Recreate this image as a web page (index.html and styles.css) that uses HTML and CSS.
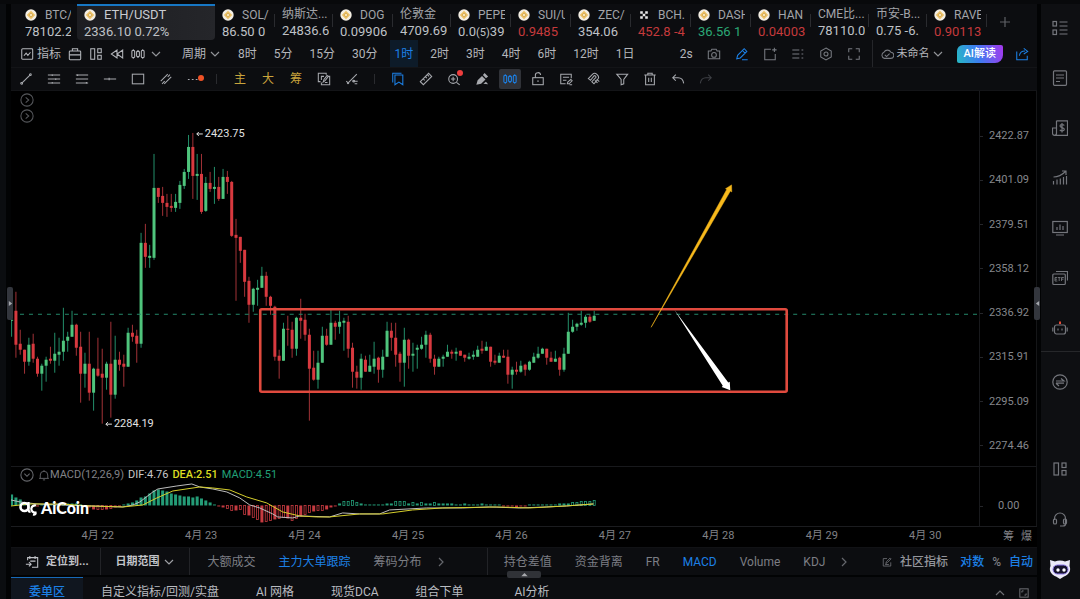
FILE: index.html
```html
<!DOCTYPE html>
<html lang="zh-CN">
<head>
<meta charset="utf-8">
<title>ETH/USDT</title>
<link rel="stylesheet" href="styles.css">
</head>
<body>
<svg class="defs" aria-hidden="true">
  <symbol id="coin" viewBox="0 0 12 12"><circle cx="6" cy="6" r="5.7" fill="#f4efe4"/><path d="M6 1.8 10.2 6 6 10.2 1.8 6Z" fill="#ecc063"/><path d="M6 4 8 6 6 8 4 6Z" fill="#f6e3b4" stroke="#c8973a" stroke-width=".6"/></symbol>
  <symbol id="okx" viewBox="0 0 12 12"><path d="M2.2 2.2h2.6v2.6H2.2zM7.2 2.2h2.6v2.6H7.2zM4.7 4.7h2.6v2.6H4.7zM2.2 7.2h2.6v2.6H2.2zM7.2 7.2h2.6v2.6H7.2z" fill="#e6e6e6"/></symbol>
  <symbol id="down" viewBox="0 0 10 10"><path d="M1 3l4 4 4-4"/></symbol>
  <symbol id="up" viewBox="0 0 10 10"><path d="M1 7l4-4 4 4"/></symbol>
  <symbol id="right" viewBox="0 0 10 10"><path d="M3 1l4 4-4 4"/></symbol>
  <symbol id="indicator" viewBox="0 0 16 16"><rect x="2" y="2" width="12.500" height="12" rx="1"/><path d="M4.500 10l2.500-3 2 2.500 3-3.500"/></symbol>
  <symbol id="case" viewBox="0 0 16 16"><rect x="1.500" y="4.500" width="13" height="10" rx="1"/><path d="M5 4.500V2h6v2.500M1.500 9h13"/></symbol>
  <symbol id="panels" viewBox="0 0 16 16"><rect x="2" y="2" width="4.500" height="12"/><rect x="10" y="2" width="4" height="4.500"/><rect x="10" y="9.500" width="4" height="4.500"/></symbol>
  <symbol id="rewind" viewBox="0 0 16 16"><path d="M8 3.500v9L1.500 8zM14.500 3.500v9L8 8z"/></symbol>
  <symbol id="bars" viewBox="0 0 16 16"><rect x="1" y="4" width="3.200" height="8" rx="1"/><rect x="6.400" y="5" width="3.200" height="6" rx="1"/><rect x="11.800" y="4" width="3.200" height="8" rx="1"/><path d="M2.600 2.500V4M2.600 12v1.500M8 3.500V5M8 11v1.500M13.400 2.500V4M13.400 12v1.500"/></symbol>
  <symbol id="camera" viewBox="0 0 16 16"><path d="M1.500 4.500h3l1-2h5l1 2h3v9h-13z"/><circle cx="8" cy="9" r="2.700"/></symbol>
  <symbol id="pen" viewBox="0 0 16 16"><path d="M2 13.500l1-4 7.500-7.500 3 3L6 12.500zM8.500 4l3 3M8 14.500h6.500"/></symbol>
  <symbol id="addframe" viewBox="0 0 16 16"><path d="M9 2.500H2v12h12V8M13 .8v5M10.500 3.300h5"/></symbol>
  <symbol id="listdots" viewBox="0 0 16 16"><path d="M1.500 3.500h8M1.500 8h8M1.500 12.500h8M12 3.500h2M12 8h2M12 12.500h2"/></symbol>
  <symbol id="hex" viewBox="0 0 16 16"><path d="M8 1.200l6 3.300v7L8 14.800l-6-3.300v-7z"/><circle cx="8" cy="8" r="2.300"/></symbol>
  <symbol id="full" viewBox="0 0 16 16"><path d="M2 6V2h4M10 2h4v4M14 10v4h-4M6 14H2v-4"/></symbol>
  <symbol id="cloud" viewBox="0 0 16 16"><path d="M5 13a3.700 3.700 0 0 1-.5-7A4.500 4.500 0 0 1 12.500 6a3.500 3.500 0 0 1-.5 7zM5.500 9l2 2 3.500-3.500"/></symbol>
  <symbol id="share" viewBox="0 0 16 16"><path d="M2 5v9.500h12V10M5 10c.5-4 3-5.500 6.500-5.500M10 1.500l4.500 3.500L10 8"/></symbol>
  <symbol id="line" viewBox="0 0 16 16"><path d="M3.500 12.500l9-9"/><circle cx="3" cy="13" r="1"/><circle cx="13" cy="3" r="1"/></symbol>
  <symbol id="fib" viewBox="0 0 16 16"><path d="M1 3.500h14M1 8h14M1 12.500h14M6 2.500v2M10 7v2M6 11.500v2"/></symbol>
  <symbol id="fib2" viewBox="0 0 16 16"><path d="M1 3.500h14M1 8h14M1 12.500h14M3 2.500v2M13 11.500v2"/></symbol>
  <symbol id="hline" viewBox="0 0 16 16"><path d="M1 8h14M7 6.500v3"/></symbol>
  <symbol id="rect" viewBox="0 0 16 16"><rect x="1.500" y="2.500" width="13" height="11"/></symbol>
  <symbol id="parallel" viewBox="0 0 16 16"><path d="M2 10.500l8-8M6 13.500l8-8M3.500 13.500l3-3M10 5.500l2.500-2.500"/></symbol>
  <symbol id="dots" viewBox="0 0 16 16"><path d="M1 8.500h2M5.500 8.500h2M10 8.500h2"/></symbol>
  <symbol id="copyedit" viewBox="0 0 16 16"><path d="M4 11H1.500V1.500h9V3M12.500 5H14.500v9.500H5V12M5 9V5h3M7 11.500l1-3 3.500-4.500 1.500 1-3.500 4.500zM9 12h3"/></symbol>
  <symbol id="cross" viewBox="0 0 16 16"><path d="M2.500 13.500l11-11M1.500 10.500l3 3M8.500 10.500h6M11 13.500h3"/><circle cx="10" cy="10.500" r="1"/></symbol>
  <symbol id="bookmark" viewBox="0 0 16 16"><path d="M4.500 3.500h9v11l-4.500-3-4.500 3zM2 12V1.500h10"/></symbol>
  <symbol id="ruler" viewBox="0 0 16 16"><path d="M1.500 11L11 1.500 14.500 5 5 14.500zM5 8l1.500 1.500M7.500 5.500L9 7M10 3.500L11.500 5"/></symbol>
  <symbol id="zoomin" viewBox="0 0 16 16"><circle cx="7" cy="8" r="5"/><path d="M10.800 11.800l3.700 3M4.500 8h5M7 5.500v5"/></symbol>
  <symbol id="eraser" viewBox="0 0 16 16"><path d="M1.500 14.500l1.500-5 5-5 4 4-5 5zM9 3.500l2-2.500 4 4-2.500 2zM9.500 13.500l3-2.500 2.500 3z" fill="currentColor" stroke="none"/></symbol>
  <symbol id="lock" viewBox="0 0 16 16"><rect x="2" y="6.500" width="12" height="8"/><path d="M5 6.500V4a3 3 0 0 1 6-.5M8 9.500v2"/></symbol>
  <symbol id="note" viewBox="0 0 16 16"><path d="M14 7V2.500H2v11h5.500M4.500 6h7M4.500 9.500h4M9.500 13.500l.5-2 3.500-3 1.500 1.500-3.500 3.500zM12 14.500h3"/></symbol>
  <symbol id="magnet" viewBox="0 0 16 16"><path d="M1.500 7.500l5-5c3-3 8.500 2.500 6 5.500L8 13.500 5.500 11l4.500-4.500c1-1-1-3-2-2L4 9.500zM9 9.500l3 3M11 8l3 3"/></symbol>
  <symbol id="filter" viewBox="0 0 16 16"><path d="M2 2.500h12.500L10 8.500v5l-3 1v-6z"/></symbol>
  <symbol id="trash" viewBox="0 0 16 16"><path d="M1.500 3.500h13M5.500 3.500v-2h5v2M3 3.500v11h10v-11M6.500 6.500v5M9.500 6.500v5"/></symbol>
  <symbol id="undo" viewBox="0 0 16 16"><path d="M5.500 3L2 6.500 5.500 10M2 6.500h6c3.500 0 6 2.500 6.500 6.500"/></symbol>
  <symbol id="redo" viewBox="0 0 16 16"><path d="M10.500 3L14 6.500 10.500 10M14 6.500H8c-3.500 0-6 2.500-6.500 6.500"/></symbol>
  <symbol id="calendar" viewBox="0 0 16 16"><path d="M3 6V3h11.500v11H8M5.500 1v3.500M11.500 1v3.500M6 7h6M1 10.500h6M4.500 8L7 10.500 4.500 13"/></symbol>
  <symbol id="edit" viewBox="0 0 16 16"><path d="M8 2.500H2v12h12V8.500M6 10.500l1-3 6-6 1.500 1.500-6 6zM5 12h6"/></symbol>
  <symbol id="bell" viewBox="0 0 16 16"><path d="M1.500 12.500h13M3 12.500V8a5 5 0 0 1 10 0v4.500M8 3V1.500M6.500 14.500h3"/></symbol>
  <symbol id="circleright" viewBox="0 0 16 16"><circle cx="8" cy="8" r="7"/><path d="M6.500 5L10 8l-3.500 3"/></symbol>
  <symbol id="circledown" viewBox="0 0 16 16"><circle cx="8" cy="8" r="7"/><path d="M5 6.500L8 9.500l3-3"/></symbol>
  <symbol id="restore" viewBox="0 0 12 12"><rect x="1" y="1" width="10" height="10"/><path d="M3.500 5.500v-2h2M8.500 6.500v2h-2"/></symbol>
  <symbol id="s-list" viewBox="0 0 16 16"><rect x="1" y="1.500" width="3.500" height="4.500"/><rect x="1" y="10" width="3.500" height="4.500"/><path d="M7.500 2h8M7.500 6h8M7.500 10h8M7.500 14h8"/></symbol>
  <symbol id="s-doc" viewBox="0 0 16 16"><rect x="1.500" y=".8" width="13" height="14.500" rx="1"/><path d="M4 5h8M4 8h8M4 11.500h4"/></symbol>
  <symbol id="s-bill" viewBox="0 0 16 16"><path d="M4.500.8h11v14.500H2.500a2 2 0 0 1-2-2V8h4M4.500.8v12.500a2 2 0 0 1-2 2M10 3v9.500M12.300 5.500c-1-1.300-4.300-1.200-4.300.6 0 1.900 4.300 1.200 4.300 3.200 0 1.900-3.400 2-4.500.5"/></symbol>
  <symbol id="s-trend" viewBox="0 0 16 16"><path d="M1.500 14.500V11M5 14.500V9.500M8.300 14.500v-6M11.500 14.500V7M14.500 14.500V6M1.500 7C7 7 10 5 13.500 1.500M10 1h4v4"/></symbol>
  <symbol id="s-screen" viewBox="0 0 16 16"><rect x=".8" y="1.500" width="14.500" height="11"/><path d="M5 10V7M8 10V4.500M11 10V6M4 15h8"/></symbol>
  <symbol id="s-etf" viewBox="0 0 16 16"><rect x=".8" y="4" width="12.500" height="10.500" rx="1"/><path d="M4 1.500h11.500v9"/><path d="M5.300 7.500H3v3.500h2.300M3 9.200h2M6 7.500h2.500M7.200 7.500V11M9.500 11V7.500h2.300M9.500 9.200h2" stroke-width=".9"/></symbol>
  <symbol id="s-bot" viewBox="0 0 16 16"><rect x="2.500" y="5" width="11" height="9" rx="2"/><path d="M.8 7.500v4M15.200 7.500v4M6 8.500v2M10 8.500v2"/><path d="M8 4V1.500" stroke="#e84a35" stroke-width="2"/></symbol>
  <symbol id="s-swap" viewBox="0 0 16 16"><circle cx="8" cy="8" r="7.200"/><path d="M4 7h8L9 4.500M4 9.200h8M4 9.200L7 12"/></symbol>
  <symbol id="s-headset" viewBox="0 0 16 16"><path d="M2.500 9V7.500a5.500 5.500 0 0 1 11 0V13c0 1.300-1 2-2.500 2H8"/><rect x="1.500" y="8" width="3" height="5" rx="1.300"/><rect x="11.500" y="8" width="3" height="5" rx="1.300"/></symbol>
</svg>

<div class="app">
  <div class="gutter"><button class="handle" aria-label="展开左栏"><svg viewBox="0 0 6 8"><path d="M1 1v6l4-3z" fill="#a4a7ad"/></svg></button></div>

  <main class="main">
    <nav class="tickers" id="tickers" aria-label="行情"></nav>

    <div class="bar periods">
      <div class="tools">
        <button class="labeled"><svg class="icon"><use href="#indicator"/></svg>指标</button>
        <button aria-label="工具箱"><svg class="icon"><use href="#case"/></svg></button>
        <button aria-label="布局"><svg class="icon"><use href="#panels"/></svg></button>
        <button aria-label="回放"><svg class="icon"><use href="#rewind"/></svg></button>
        <button class="kline" aria-label="K线类型"><svg class="icon"><use href="#bars"/></svg><svg class="icon small"><use href="#down"/></svg></button>
      </div>
      <button class="cycle">周期<svg class="icon small"><use href="#down"/></svg></button>
      <div class="times">
        <button>8时</button><button>5分</button><button>15分</button><button>30分</button><button class="active">1时</button><button>2时</button><button>3时</button><button>4时</button><button>6时</button><button>12时</button><button>1日</button>
      </div>
      <div class="actions">
        <button>2s</button>
        <button aria-label="截图"><svg class="icon dim"><use href="#camera"/></svg></button>
        <button class="blue" aria-label="画图"><svg class="icon"><use href="#pen"/></svg></button>
        <button aria-label="新建"><svg class="icon dim"><use href="#addframe"/></svg></button>
        <button aria-label="列表"><svg class="icon dim"><use href="#listdots"/></svg></button>
        <button aria-label="设置"><svg class="icon dim"><use href="#hex"/></svg></button>
        <button aria-label="全屏"><svg class="icon dim"><use href="#full"/></svg></button>
      </div>
      <div class="saved">
        <button class="layout-name"><svg class="icon dim"><use href="#cloud"/></svg>未命名<svg class="icon small"><use href="#down"/></svg></button>
        <button class="ai">AI解读</button>
        <button class="blue" aria-label="分享"><svg class="icon"><use href="#share"/></svg></button>
      </div>
    </div>

    <div class="bar drawing">
      <div class="draw-group">
        <button aria-label="线段"><svg class="icon"><use href="#line"/></svg></button>
        <button aria-label="斐波那契"><svg class="icon"><use href="#fib"/></svg></button>
        <button aria-label="通道"><svg class="icon"><use href="#fib2"/></svg></button>
        <button aria-label="水平线"><svg class="icon"><use href="#hline"/></svg></button>
        <button aria-label="矩形"><svg class="icon"><use href="#rect"/></svg></button>
        <button aria-label="平行线"><svg class="icon"><use href="#parallel"/></svg></button>
        <button class="has-dot low" aria-label="更多"><svg class="icon"><use href="#dots"/></svg></button>
      </div>
      <div class="draw-group gold">
        <button>主</button><button>大</button><button>筹</button>
        <button class="plain" aria-label="编辑副本"><svg class="icon"><use href="#copyedit"/></svg></button>
        <button class="plain" aria-label="交叉线"><svg class="icon"><use href="#cross"/></svg></button>
      </div>
      <div class="draw-group">
        <button class="blue" aria-label="收藏"><svg class="icon"><use href="#bookmark"/></svg></button>
        <button aria-label="测量"><svg class="icon"><use href="#ruler"/></svg></button>
        <button class="has-dot" aria-label="放大"><svg class="icon"><use href="#zoomin"/></svg></button>
        <button aria-label="橡皮"><svg class="icon"><use href="#eraser"/></svg></button>
        <button class="blue pressed" aria-label="K线"><svg class="icon"><use href="#bars"/></svg></button>
        <button aria-label="锁定"><svg class="icon"><use href="#lock"/></svg></button>
        <button aria-label="笔记"><svg class="icon"><use href="#note"/></svg></button>
        <button aria-label="磁铁"><svg class="icon"><use href="#magnet"/></svg></button>
        <button aria-label="筛选"><svg class="icon"><use href="#filter"/></svg></button>
        <button aria-label="删除"><svg class="icon"><use href="#trash"/></svg></button>
        <button aria-label="撤销"><svg class="icon"><use href="#undo"/></svg></button>
        <button class="off" aria-label="重做"><svg class="icon"><use href="#redo"/></svg></button>
      </div>
    </div>

    <section class="pane price">
      <svg class="plot" viewBox="11 91 969 375" preserveAspectRatio="xMinYMin meet">
        <g id="candles"></g>
        <path class="last-price" d="M20 314.500H980"/>
        <rect class="range" x="260.500" y="309.500" width="527" height="82.500" rx="1.500"/>
        <path d="M651.800 327.500L727.500 189.500l-1.200-.7 6-3.800.2 7-1.400-.8z" fill="#f7b91c" stroke="#f7b91c" stroke-width=".5"/>
        <path d="M675 310L723.500 386l-1 1.200 8.500 3.300-.5-8.500-1.500.7z" fill="#fff"/>
        <text class="mark" x="205" y="137">2423.75</text>
        <path class="mark-arrow" d="M203 134h-6m2-2l-2 2 2 2"/>
        <text class="mark" x="114" y="427">2284.19</text>
        <path class="mark-arrow" d="M112 424.500h-6m2-2l-2 2 2 2"/>
      </svg>
      <div class="price-axis"><span>2422.87</span><span>2401.09</span><span>2379.51</span><span>2358.12</span><span>2336.92</span><span>2315.91</span><span>2295.09</span><span>2274.46</span></div>
      <div class="expanders">
        <button aria-label="展开"><svg class="icon"><use href="#circleright"/></svg></button>
        <button aria-label="展开"><svg class="icon"><use href="#circleright"/></svg></button>
      </div>
    </section>

    <section class="pane macd">
      <svg class="plot" viewBox="11 467 969 59" preserveAspectRatio="xMinYMin meet"><g id="macd"></g></svg>
      <div class="price-axis zero"><span>0.00</span></div>
      <div class="legend">
        <button aria-label="收起"><svg class="icon"><use href="#circledown"/></svg></button>
        <span class="name"><svg class="icon"><use href="#bell"/></svg>MACD(12,26,9)</span>
        <span class="dif">DIF:4.76</span><span class="dea">DEA:2.51</span><span class="hist">MACD:4.51</span>
      </div>
      <div class="brand">
        <svg viewBox="0 0 18 16"><circle cx="5.500" cy="7" r="4" fill="none" stroke="#fff" stroke-width="2.600"/><path d="M9.500 2v7.500c0 2 1 2.500 2 2.500M17 5.500a3.600 3.600 0 1 0-.5 7c.5 1.500-.5 2.500-2.500 2" fill="none" stroke="#fff" stroke-width="2.200"/></svg>
        <span>AiCoin</span>
      </div>
    </section>

    <div class="dates">
      <div class="days"><span>4月 22</span><span>4月 23</span><span>4月 24</span><span>4月 25</span><span>4月 26</span><span>4月 27</span><span>4月 28</span><span>4月 29</span><span>4月 30</span></div>
      <div class="flags"><button>筹</button><button>爆</button></div>
    </div>

    <div class="indicators">
      <div class="seg"><button class="strong locate"><svg class="icon"><use href="#calendar"/></svg>定位到...</button></div>
      <div class="seg"><button class="strong">日期范围<svg class="icon small"><use href="#down"/></svg></button></div>
      <div class="seg list orders"><button>大额成交</button><button class="blue">主力大单跟踪</button><button>筹码分布</button><button aria-label="更多"><svg class="icon small"><use href="#right"/></svg></button></div>
      <div class="seg list studies"><button>持仓差值</button><button>资金背离</button><button>FR</button><button class="blue">MACD</button><button>Volume</button><button>KDJ</button><button aria-label="更多"><svg class="icon small"><use href="#right"/></svg></button></div>
      <div class="scale"><button class="community"><svg class="icon small"><use href="#edit"/></svg>社区指标</button><button class="blue">对数</button><button>%</button><button class="blue">自动</button></div>
      <button class="pull" aria-label="展开面板"><svg viewBox="0 0 8 5"><path d="M0 4h8L4 0z" fill="#a7a9ad"/></svg></button>
    </div>

    <div class="bottom">
      <button class="active">委单区</button><button>自定义指标/回测/实盘</button><button>AI 网格</button><button>现货DCA</button><button>组合下单</button><button class="apart">AI分析</button>
      <div class="window"><button aria-label="展开"><svg class="icon small"><use href="#up"/></svg></button><button aria-label="窗口"><svg class="icon small"><use href="#restore"/></svg></button></div>
    </div>
    <button class="handle end" aria-label="收起右栏"><svg viewBox="0 0 6 8"><path d="M5 1v6L1 4z" fill="#a4a7ad"/></svg></button>
  </main>

  <aside class="side">
    <button aria-label="自选"><svg class="icon"><use href="#s-list"/></svg></button>
    <button aria-label="资讯"><svg class="icon"><use href="#s-doc"/></svg></button>
    <button aria-label="资产"><svg class="icon"><use href="#s-bill"/></svg></button>
    <button aria-label="走势"><svg class="icon"><use href="#s-trend"/></svg></button>
    <button aria-label="数据"><svg class="icon"><use href="#s-screen"/></svg></button>
    <button aria-label="ETF"><svg class="icon"><use href="#s-etf"/></svg></button>
    <button aria-label="机器人"><svg class="icon"><use href="#s-bot"/></svg></button>
    <hr>
    <button aria-label="兑换"><svg class="icon"><use href="#s-swap"/></svg></button>
    <div class="foot">
      <button aria-label="面板"><svg class="icon"><use href="#panels"/></svg></button>
      <button aria-label="客服"><svg class="icon"><use href="#s-headset"/></svg></button>
      <button aria-label="助手"><svg class="mascot" viewBox="0 0 22 22"><path d="M1 2l5 1.500C9 2 13 2 16 3.500L21 2l-.5 6c2 5-1 9-5.500 10.500L11 21l-4-2.500C2.500 17-.5 13 1.500 8z" fill="#eceaf8"/><rect x="4" y="7" width="15" height="9" rx="4.500" fill="#15122b" stroke="#8e7bea"/><circle cx="9" cy="12" r="1.700" fill="#fff"/><circle cx="15" cy="12" r="1.700" fill="#fff"/></svg></button>
    </div>
  </aside>
</div>
<script src="chart.js"></script>
</body>
</html>
```
FILE: styles.css
```css
* { box-sizing: border-box; }
body {
  margin: 0;
  background: #020304;
  color: #b4b6bb;
  font: 12px/16px Roboto, "Noto Sans CJK SC", sans-serif;
}
button {
  display: inline-flex;
  align-items: center;
  justify-content: center;
  flex: none;
  margin: 0;
  padding: 0;
  border: 0;
  background: none;
  color: inherit;
  font: inherit;
  white-space: nowrap;
}
.defs { display: none; }
.icon {
  width: 14px;
  height: 14px;
  flex: none;
  fill: none;
  stroke: currentColor;
  stroke-width: 1.2;
}
.icon.small { width: 10px; height: 10px; opacity: .8; }
.icon.dim { color: #777a80; }
.app { display: flex; height: 100vh; overflow: hidden; border-top: 4px solid #08090b; }
.gutter { position: relative; width: 11px; flex: none; background: linear-gradient(90deg, #0b0d10 6px, #020304 6px); }
.main { position: relative; flex: 1; min-width: 0; display: flex; flex-direction: column; }
.handle {
  position: absolute;
  top: 283px;
  left: 7px;
  z-index: 2;
  width: 6px;
  height: 33px;
  border-radius: 2px;
  background: #33363d;
}
.handle svg { width: 5px; height: 7px; }
.handle.end { left: auto; right: -3px; }

/* ticker strip */
.tickers { display: flex; height: 36px; flex: none; background: #0c0d10; }
.ticker {
  position: relative;
  flex: 1 1 0;
  min-width: 0;
  flex-direction: column;
  align-items: stretch;
  justify-content: flex-start;
  gap: 1px;
  padding: 3px 6px 0 7px;
  text-align: left;
  color: #a2a4a9;
}
.ticker:not(.current)::after {
  content: "";
  position: absolute;
  right: 0;
  top: 10px;
  width: 1px;
  height: 13px;
  background: #2a2b2f;
}
.ticker.first { flex: none; width: 66px; padding-left: 14px; }
.ticker.first::after { display: none; }
.ticker.current {
  flex: none;
  width: 138px;
  border-top: 2px solid #1777c4;
  border-radius: 0 0 4px 4px;
  background: linear-gradient(90deg, #1c1d21, #25262a);
  padding-top: 1px;
  color: #c9cbd0;
}
.ticker .name { display: flex; gap: 8px; align-items: center; height: 16px; overflow: hidden; }
.ticker.current .name { font-size: 13px; }
.ticker.text { padding-right: 4px; }
.ticker.text .name { height: 15px; padding-bottom: 2px; }
.ticker .coin { width: 12px; height: 12px; flex: none; }
.ticker .value { overflow: hidden; font-size: 13px; color: #bfc1c6; }
.ticker .value small { font-size: 11px; }
.ticker.down .value { color: #c53a3c; }
.ticker.up .value { color: #2ba876; }
.add { width: 36px; margin-right: 14px; color: #74767b; }

/* toolbars */
.bar { display: flex; align-items: center; flex: none; background: #0c0d10; border-bottom: 1px solid #131417; }
.periods { height: 28px; padding: 0 8px 0 9px; }
.tools { display: flex; gap: 7px; }
.labeled { gap: 3px; }
.kline { gap: 6px; }
.cycle { gap: 4px; margin: 0 13px 0 21px; }
.times { display: flex; align-self: stretch; gap: 7px; }
.times button { padding: 0 5px; }
.times .active { background: #0d1b29; }
.blue, .times .active { color: #1c80e6; }
.actions { display: flex; gap: 14px; margin-left: auto; padding-right: 11px; }
.saved { display: flex; align-self: stretch; align-items: center; padding-left: 7px; border-left: 1px solid #25262a; gap: 12px; }
.layout-name { gap: 3px; font-size: 11px; padding-right: 2px; }
.ai {
  height: 18px;
  padding: 0 7px;
  border-radius: 6px 2px 8px 2px;
  background: linear-gradient(75deg, #27b9c4, #3d7cf0 45%, #a637ee);
  color: #fff;
  font-size: 11px;
  font-weight: 500;
}
.drawing { height: 23px; padding-left: 4px; }
.draw-group { display: flex; gap: 6px; padding-right: 11px; }
.draw-group + .draw-group { position: relative; padding-left: 13px; }
.draw-group + .draw-group::before { content: ""; position: absolute; left: 0; top: 5px; width: 1px; height: 10px; background: #2a2b2f; }
.draw-group button { position: relative; width: 22px; height: 20px; color: #a7a9ae; }
.draw-group.gold button { color: #c9a43c; }
.draw-group.gold .plain { color: #a7a9ae; }
.draw-group .blue { color: #1c80e6; }
.draw-group .pressed { border-radius: 2px; background: #303238; }
.draw-group .off { color: #3d3f44; }
.has-dot::after { content: ""; position: absolute; right: 2px; top: 1px; width: 6px; height: 6px; border-radius: 50%; background: #ee3e3e; }
.has-dot.low::after { right: 1px; top: 6px; background: #ef5226; }

/* chart panes */
.pane { position: relative; display: flex; background: #000; border-right: 1px solid #151618; }
.price { flex: 1 1 0; min-height: 0; }
.macd { height: 60px; flex: none; border-top: 1px solid #18191c; }
.plot { flex: 1; min-width: 0; height: 100%; }
.price-axis {
  width: 57px;
  flex: none;
  display: flex;
  flex-direction: column;
  justify-content: space-between;
  padding: 39px 0 14px;
  border-left: 1px solid #18191c;
  color: #85878c;
  font-size: 11px;
  line-height: 12px;
}
.price-axis span { display: flex; align-items: center; gap: 6px; }
.price-axis span::before { content: ""; width: 3px; height: 1px; background: #25262a; }
.price-axis.zero { padding: 33px 0 0; justify-content: flex-start; }
.zero span { gap: 15px; }
.last-price { fill: none; stroke: #24896a; stroke-dasharray: 4 5; }
.range { fill: none; stroke: #e04a3e; stroke-width: 2.6; }
.mark { fill: #e3e3e3; font-size: 11px; }
.mark-arrow { fill: none; stroke: #e3e3e3; }
.expanders { position: absolute; left: 9px; top: 2px; display: grid; gap: 2px; color: #55575b; }
.legend { position: absolute; left: 9px; top: 0; display: flex; gap: 4px; font-size: 11px; color: #808287; }
.legend .name { display: flex; align-items: center; }
.legend .icon { color: #66686c; }
.legend .name .icon { width: 12px; }
.legend .dif { color: #c8c8c8; }
.legend .dea { color: #dddd22; font-weight: 500; }
.legend .hist { color: #20a178; }
.brand { position: absolute; left: 8px; top: 32px; display: flex; gap: 4px; align-items: center; color: #fff; font: 900 16px/18px Lato, sans-serif; }
.brand svg { width: 18px; height: 16px; }
.dates { display: flex; height: 21px; flex: none; background: #000; border-top: 1px solid #1b1c1f; color: #808287; font-size: 11px; }
.days { display: flex; flex: 1; padding-left: 35px; line-height: 18px; }
.days span { flex: 1; text-align: center; white-space: nowrap; }
.flags { width: 60px; display: flex; justify-content: flex-end; gap: 7px; padding-right: 5px; }

/* study bar */
.indicators { position: relative; display: flex; align-items: center; height: 28px; flex: none; background: #0c0d10; color: #7c7e84; border-top: 1px solid #111215; }
.seg { display: flex; align-items: center; align-self: stretch; padding: 0 15px; border-right: 1px solid #222327; }
.seg:first-child { padding: 0 11px 0 14px; }
.seg button { gap: 4px; }
.seg .locate { gap: 7px; }
.strong { color: #c2c4c9; font-weight: 700; font-size: 11px; }
.seg.list { gap: 23px; padding-left: 18px; }
.seg.orders { padding-right: 41px; }
.seg.list:nth-child(4) { border: 0; padding-left: 16px; }
.seg.list button:last-child { margin-left: -9px; }
.scale { display: flex; margin-left: auto; gap: 8px; padding-right: 4px; font-weight: 500; }
.community { gap: 8px; margin-right: 4px; color: #94969c; }
.pull { position: absolute; left: 496px; bottom: -3px; z-index: 2; width: 34px; height: 7px; border-radius: 2px; background: #303237; }
.pull svg { width: 7px; height: 4px; }
.bottom { display: flex; height: 22px; flex: none; margin-top: 2px; overflow: hidden; background: #0c0d10; color: #b9bbc0; align-items: stretch; }
.bottom > button { padding: 7px 19px 0 18px; }
.bottom .active { border-top: 1px solid #1769b8; padding: 6px 18px 0; background: #10161f; color: #1c80e6; font-weight: 500; }
.bottom .apart { margin-left: 14px; }
.window { display: flex; gap: 14px; margin-left: auto; padding: 9px 8px 0 0; color: #85878c; }

/* right rail */
.side { display: flex; flex-direction: column; width: 39px; flex: none; margin-left: 4px; background: #0e0f12; color: #74767c; }
.side button { display: flex; width: 100%; height: 50px; padding: 0 2px 2px 0; }
.side .icon { width: 16px; height: 16px; }
.side hr { width: 100%; margin: -3px 0 6px; border: 0; border-top: 1px solid #26272a; }
.foot { margin-top: auto; padding-bottom: 4px; }
.mascot { width: 22px; height: 22px; }
```
FILE: chart.js
```js
const tickers = [
  ["BTC/", "78102.2", "first", "coin"], ["ETH/USDT", "2336.10 0.72%", "current", "coin"],
  ["SOL/", "86.50 0", "", "coin"], ["纳斯达...", "24836.6", "text"], ["DOG", "0.09906", "", "coin"],
  ["伦敦金", "4709.69", "text"], ["PEPE", "0.0<small>(5)</small>39", "", "coin"], ["SUI/U", "0.9485", "down", "coin"],
  ["ZEC/", "354.06", "", "coin"], ["BCH.", "452.8 -4", "down", "okx"], ["DASH", "36.56 1", "up", "coin"],
  ["HAN", "0.04003", "down", "coin"], ["CME比...", "78110.0", "text"], ["币安-B...", "0.75 -6.", "text"],
  ["RAVE", "0.90113", "down", "coin"]
];
document.getElementById("tickers").innerHTML = tickers.map(([name, value, kind, icon]) =>
  `<button class="ticker ${kind}"><span class="name">${icon ? `<svg class="coin"><use href="#${icon}"/></svg>` : ""}${name}</span><span class="value">${value}</span></button>`
).join("") + '<button class="add" aria-label="添加"><svg class="icon small" viewBox="0 0 10 10"><path d="M5 0v10M0 5h10"/></svg></button>';

// colour, high, body top, body bottom, low (plot units)
const bars = `g312,320,321,337 r292,311,345,358 r330,344,350,355 r350,350,362,374 g338,345,362,366 r334,344,359,363 r357,359,374,377 g364,366,374,391
g357,360,366,382 r347,359,361,364 g333,354,361,373 g338,352,355,366 g308,341,352,361 g332,337,341,352 g311,325,337,337 r324,325,348,356
r332,347,374,403 g353,364,374,388 r332,364,393,401 g368,369,393,411 r338,369,376,377 r349,374,378,424 g362,364,378,390 r322,364,395,418
g336,360,395,399 r352,360,365,371 r355,364,367,387 g328,333,367,367 r325,333,337,342 r330,336,344,363 g233,243,344,348 r224,243,257,268
g245,256,258,268 g154,188,258,260 r188,188,197,203 r187,196,203,216 r194,203,207,217 r194,206,208,212 g194,202,208,212 g181,185,203,209
g169,172,186,189 g135,147,172,179 r133,147,176,199 g154,174,176,200 r154,174,212,214 g177,183,211,212 r172,183,189,192 g167,187,189,204
r177,187,199,201 g169,177,199,199 r171,177,182,194 r181,182,236,237 r219,235,238,301 r237,237,251,263 r250,250,282,297 r277,281,305,323
g288,289,305,312 g280,288,290,306 g267,276,288,288 r272,276,297,306 r296,297,306,315 r306,307,357,361 r350,356,361,379 g323,329,361,361
r316,329,330,346 r322,330,349,358 g317,318,349,356 r299,318,321,339 r314,320,335,341 r329,335,369,421 r351,368,380,381 g351,363,380,389
g327,336,363,363 r329,336,345,346 g309,323,345,345 r321,323,327,340 g311,322,327,334 g318,321,323,351 r316,322,349,358 r343,348,372,388
r366,372,378,389 g354,359,378,390 r356,360,372,372 g355,366,372,372 g342,359,367,374 r357,358,370,383 g350,357,370,378 g322,331,357,357
r323,331,338,351 r323,338,355,367 r352,354,363,382 g328,340,363,387 r339,340,356,369 g343,354,356,372 g345,348,350,369 g337,345,349,350
g331,335,345,358 r333,335,359,363 r355,359,367,375 g357,359,367,367 g355,357,359,367 g345,352,357,357 r350,352,354,359 g348,352,354,361
r351,351,356,356 r355,355,358,362 g353,357,359,360 g351,355,357,360 g346,350,357,357 r341,349,351,354 g342,347,351,351 r347,347,362,367
r355,361,363,365 g353,356,363,363 r350,356,358,358 r350,357,375,384 g367,370,375,389 r362,370,372,375 g361,366,372,373 r364,365,370,376
g361,362,370,371 g353,357,363,363 g347,354,358,359 g348,349,354,354 r349,349,358,365 r352,358,362,362 g351,359,362,362 r357,358,370,376
g348,354,370,372 g313,332,354,354 g320,327,332,333 g323,324,327,331 g311,323,325,326 g315,317,323,328 r315,317,322,323 g311,316,321,321`.split(/\s+/);
const green = "#4fc47c", red = "#d8393f", wickGreen = "#23906a", wickRed = "#a33237";
const xAt = i => 11.6 + i * 4.32;
document.getElementById("candles").innerHTML = bars.map((bar, i) => {
  const up = bar[0] === "g", [high, top, bottom, low] = bar.slice(1).split(",").map(Number), x = xAt(i);
  return `<path d="M${x} ${high}V${low}" stroke="${up ? wickGreen : wickRed}"/><rect x="${x - 1.5}" y="${top}" width="3" height="${Math.max(bottom - top, 1)}" fill="${up ? green : red}"/>`;
}).join("");

const hist = [11,8,6,3,2,-1,-1,1,1,1,1,1,2,2,2,2,1,-1,-2,-4,-4,-4,-4,-3,-2,-1,1,2,3,5,8,9,12,15,16,15,14,12,11,10,9,9,8,9,7,5,3,1,-1,-2,-3,-5,-5,-4,-9,-10,-12,-14,-17,-16,-15,-14,-13,-12,-13,-15,-13,-11,-9,-7,-6,-5,-5,-4,-2,-1,2,4,4,5,3,2,1,1,1,1,1,2,2,4,4,4,2,3,2,3,2,2,3,2,2,2,2,1,1,2,1,1,1,2,1,1,1,1,-1,-1,-1,-2,-1,-1,1,1,1,1,1,1,1,2,2,2,3,3,4,4,4,5];
const zero = 505.5;
const columns = hist.map((h, i) => {
  const x = xAt(i), size = Math.abs(h), y = h > 0 ? zero - h : zero, color = h > 0 ? "#249c77" : "#c53a40";
  const hollow = size > 2 && (h < 0 ? i % 3 !== 1 : i > 60);
  return hollow
    ? `<rect x="${x - 1}" y="${y}" width="2" height="${size}" fill="none" stroke="${color}" stroke-width=".8"/>`
    : `<rect x="${x - 1.5}" y="${y}" width="3" height="${size}" fill="${color}"/>`;
}).join("");
const dif = "11,500 20,502 37,504 60,505 90,506 123,507 133,505 140,502 153,492 158,489 177,486 192,484 200,487 213,489 227,492 240,498 250,505 260,508 273,514 278,517 293,518 300,516 330,517 343,513 360,514 380,514 390,510 427,508 463,508 490,507 520,508 547,507 567,506 594,504";
const dea = "11,506 30,504 60,504 90,506 123,507 143,505 157,498 173,491 200,487 213,488 230,490 247,497 267,503 283,512 300,516 317,517 330,517 360,514 383,514 413,510 443,508 497,507 530,508 567,506 594,504";
document.getElementById("macd").innerHTML = columns +
  `<polyline points="${dif}" fill="none" stroke="#bdbdbd"/><polyline points="${dea}" fill="none" stroke="#d6cf2c"/>`;
```
